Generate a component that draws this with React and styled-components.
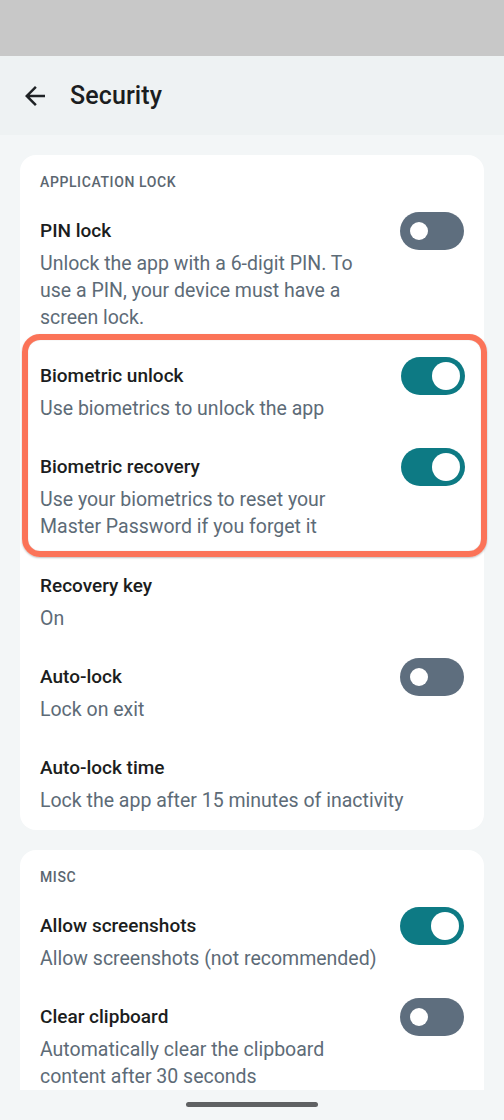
import React from 'react';
import styled, { createGlobalStyle } from 'styled-components';

const GlobalStyle = createGlobalStyle`
  html, body {
    margin: 0;
    padding: 0;
    height: 1120px;
    overflow: hidden;
    background: #f3f6f7;
    font-family: Roboto, "Noto Sans", sans-serif;
  }
`;

const Screen = styled.div`
  width: 504px;
  height: 1120px;
  display: flex;
  flex-direction: column;
  background: #f3f6f7;
  overflow: hidden;
`;

const StatusBar = styled.div`
  height: 56px;
  flex-shrink: 0;
  background: #c8c8c8;
`;

const AppBar = styled.header`
  height: 79px;
  flex-shrink: 0;
  display: flex;
  align-items: center;
  gap: 20px;
  padding-left: 20px;
  background: #eef2f3;
`;

const Title = styled.h1`
  margin: 0;
  font-size: 25px;
  font-weight: 500;
  color: #1b1d20;
  letter-spacing: 0.1px;
`;

const Content = styled.main`
  display: flex;
  flex-direction: column;
  gap: 20px;
  padding: 20px;
`;

const Card = styled.section`
  background: #fff;
  border-radius: 16px;
  padding: 18px 20px 0;
`;

const SectionHeader = styled.div`
  font-size: 14px;
  line-height: 18px;
  font-weight: 500;
  letter-spacing: 0.6px;
  color: #5b6670;
  text-transform: uppercase;
  margin-bottom: 11px;
`;

const Row = styled.div`
  display: flex;
  align-items: flex-start;
  gap: 20px;
  padding: 16px 0;
`;

const Texts = styled.div`
  flex: 1;
  max-width: ${p => (p.$narrow ? '341px' : 'none')};
`;

const RowTitle = styled.div`
  font-size: 19px;
  line-height: 26px;
  font-weight: 500;
  color: #1b1d20;
`;

const RowSub = styled.div`
  margin-top: 6px;
  font-size: 19.5px;
  line-height: 27px;
  color: #5d6b77;
`;

const Highlight = styled.div`
  margin: -13px -23px 0 -18px;
  padding: 7px 16px 0 12px;
  border: 6px solid #fb7358;
  border-radius: 18px;
  box-shadow: 0 1px 2px rgba(0, 0, 0, 0.25), inset 0 0 1px rgba(0, 0, 0, 0.3);
  & > ${Row}:last-child {
    padding-bottom: 11px;
  }
`;

const Track = styled.div`
  margin-top: -6px;
  margin-left: auto;
  flex-shrink: 0;
  width: 64px;
  height: 38px;
  border-radius: 19px;
  background: ${p => (p.$on ? '#0d7a84' : '#5e6e7e')};
  display: flex;
  align-items: center;
  justify-content: ${p => (p.$on ? 'flex-end' : 'flex-start')};
  padding: 0 ${p => (p.$on ? '5px' : '10px')};
  box-sizing: border-box;
`;

const Knob = styled.div`
  width: ${p => (p.$on ? '28px' : '18px')};
  height: ${p => (p.$on ? '28px' : '18px')};
  border-radius: 50%;
  background: #fff;
`;

const NavBar = styled.div`
  position: fixed;
  left: 0;
  right: 0;
  bottom: 0;
  height: 30px;
  background: #f3f6f7;
  display: flex;
  justify-content: center;
  padding-top: 12px;
  box-sizing: border-box;
`;

const Handle = styled.div`
  width: 132px;
  height: 5px;
  border-radius: 3px;
  background: #5f6163;
`;

const BackArrow = () => (
  <svg width="30" height="30" viewBox="0 0 24 24" fill="#1f2225">
    <path d="M20 11H7.83l5.59-5.59L12 4l-8 8 8 8 1.41-1.41L7.83 13H20v-2z" />
  </svg>
);

const Toggle = ({ on }) => (
  <Track $on={on}>
    <Knob $on={on} />
  </Track>
);

const Setting = ({ title, sub, toggle }) => (
  <Row>
    <Texts $narrow={toggle !== undefined}>
      <RowTitle>{title}</RowTitle>
      <RowSub>{sub}</RowSub>
    </Texts>
    {toggle !== undefined && <Toggle on={toggle} />}
  </Row>
);

export default function App() {
  return (
    <Screen>
      <GlobalStyle />
      <StatusBar />
      <AppBar>
        <BackArrow />
        <Title>Security</Title>
      </AppBar>
      <Content>
        <Card>
          <SectionHeader>Application lock</SectionHeader>
          <Setting
            title="PIN lock"
            sub="Unlock the app with a 6-digit PIN. To use a PIN, your device must have a screen lock."
            toggle={false}
          />
          <Highlight>
            <Setting title="Biometric unlock" sub="Use biometrics to unlock the app" toggle />
            <Setting
              title="Biometric recovery"
              sub="Use your biometrics to reset your Master Password if you forget it"
              toggle
            />
          </Highlight>
          <Setting title="Recovery key" sub="On" />
          <Setting title="Auto-lock" sub="Lock on exit" toggle={false} />
          <Setting title="Auto-lock time" sub="Lock the app after 15 minutes of inactivity" />
        </Card>
        <Card>
          <SectionHeader>Misc</SectionHeader>
          <Setting title="Allow screenshots" sub="Allow screenshots (not recommended)" toggle />
          <Setting
            title="Clear clipboard"
            sub="Automatically clear the clipboard content after 30 seconds"
            toggle={false}
          />
        </Card>
      </Content>
      <NavBar>
        <Handle />
      </NavBar>
    </Screen>
  );
}
